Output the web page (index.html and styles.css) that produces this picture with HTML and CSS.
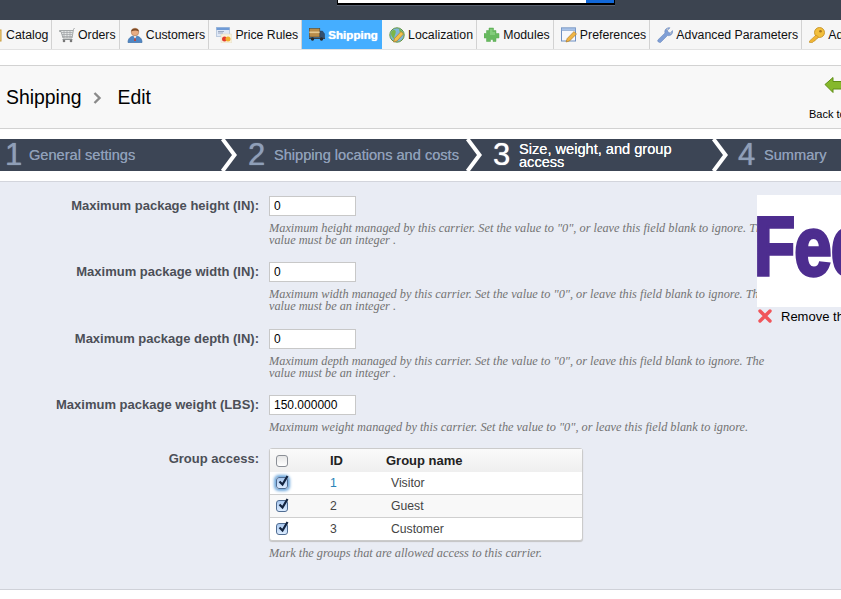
FILE: index.html
```html
<!DOCTYPE html>
<html lang="en">
<head>
<meta charset="utf-8">
<title>Shipping &gt; Edit</title>
<link rel="stylesheet" href="styles.css">
</head>
<body>
<header class="topbar">
  <div class="search"><span class="search-btn"></span></div>
</header>
<nav class="menu">
  <a class="item item-first"><svg class="ico" viewBox="0 0 16 16"><rect x="1" y="3" width="13" height="11" fill="#f3d68a" stroke="#c79a3a"/></svg>Catalog</a>
  <a class="item"><svg class="ico" viewBox="0 0 16 16"><path d="M15.500 1l-1 1.500L13 11H4L2 4.500H.5V3.500h13.500" fill="#e4e7e7" stroke="#8f9496" stroke-width=".8"/><path d="M2.500 5.500h11M3 7.500h10M3.500 9.500h9.500M5 4v7M8 4v7M11 4v7" stroke="#9da1a3" stroke-width=".7"/><path d="M3.500 12.500h10" stroke="#8f9496"/><circle cx="5" cy="14" r="1.300" fill="#777"/><circle cx="12" cy="14" r="1.300" fill="#777"/></svg>Orders</a>
  <a class="item"><svg class="ico" viewBox="0 0 16 16"><path d="M1 15.500c0-4 2.500-6.500 7-6.500s7 2.500 7 6.500z" fill="#4f87c4" stroke="#3d6ea6" stroke-width=".7"/><path d="M6.500 9h3L8 12z" fill="#f0f0f0"/><path d="M7.500 11h1l.5 3H7z" fill="#c8402e"/><circle cx="8" cy="5" r="3.800" fill="#e9ad82" stroke="#9c6a44" stroke-width=".5"/><path d="M4.200 4.500C4 .5 12 .2 11.800 4.500 10 3.300 7 3.300 4.200 4.500z" fill="#7c4a26"/></svg>Customers</a>
  <a class="item"><svg class="ico" viewBox="0 0 16 16"><rect x=".5" y="0.500" width="13" height="9" fill="#dfe8f6" stroke="#a9bcd6" stroke-width=".7"/><rect x=".5" y=".5" width="13" height="2.500" fill="#6f9bd6"/><path d="M2 4.500h6M2 6h5" stroke="#8a9bb8" stroke-width=".8"/><rect x="5" y="7" width="11" height="9" rx="1" fill="#f8f1dc" stroke="#ddd5bd" stroke-width=".5"/><circle cx="8.500" cy="12" r="2.500" fill="#e23b2e"/><circle cx="12" cy="12" r="2.500" fill="#f1b02f"/></svg>Price Rules</a>
  <a class="item item-active"><svg class="ico" viewBox="0 0 16 16"><rect x=".3" y="1.500" width="10.500" height="8.500" fill="#b98c4a" stroke="#5d4522" stroke-width=".6"/><rect x=".3" y="4.500" width="10.500" height="1.600" fill="#e5c88f"/><path d="M11 4h2.500L15.700 7v3.500H11z" fill="#33506e" stroke="#233a52" stroke-width=".4"/><rect x="0" y="10.500" width="16" height="1.500" fill="#37404c"/><circle cx="3.500" cy="12" r="1.700" fill="#2a2a2a"/><circle cx="12.500" cy="12" r="1.700" fill="#2a2a2a"/></svg>Shipping</a>
  <a class="item"><svg class="ico" viewBox="0 0 16 16"><circle cx="8" cy="8" r="7.200" fill="#7fb7d8" stroke="#64953d"/><path d="M2.500 4.500c3-3 5-1 4 2S5 9 6 12.500C3 11 1.200 7.500 2.500 4.500zM10 1.800c2.500 1 4.500 3.500 4.500 6-2.300 0-4.500-3-4.500-6z" fill="#7cb648"/><path d="M4.500 15l1-3.500 6.500-7 2.500 2.500-6.500 7z" fill="#f2c14a" stroke="#a8742a" stroke-width=".6"/></svg>Localization</a>
  <a class="item"><svg class="ico" viewBox="0 0 16 16"><path d="M5 1h4.500v2.500h2.500v3h3V11h-3v3.500H9V12.500H6.500v2H2.500V11H0V6.500h2.500v-3H5z" fill="#67b95f" stroke="#58a850" stroke-width=".5"/><path d="M6 2h2.500v3H11v3H6z" fill="#82cc7a"/></svg>Modules</a>
  <a class="item"><svg class="ico" viewBox="0 0 16 16"><rect x=".5" y="1" width="14" height="13" fill="#f6f8fc" stroke="#6f8fc0"/><rect x=".5" y="1" width="14" height="2.500" fill="#a9c3e8" stroke="#6f8fc0" stroke-width=".5"/><path d="M5 15l1.200-3.500L13 4.500l2.500 2.500-7 7z" fill="#f0b544" stroke="#a8741e" stroke-width=".6"/></svg>Preferences</a>
  <a class="item"><svg class="ico" viewBox="0 0 16 16"><path d="M.8 13L8 6C7 3 9.500.3 13 .8L10.500 3.300l.7 2 2 .7L15.600 3.500C16 7 13.500 9.300 10.500 8.500l-7 7C2 16 .3 14.500.8 13z" fill="#7f9fd6" stroke="#5f7fb6" stroke-width=".5"/><path d="M11 1.500l-1 1.500M13.200 6.500l1.200-1" stroke="#c8c8c8" stroke-width="1.200"/></svg>Advanced Parameters</a>
  <a class="item"><svg class="ico" viewBox="0 0 16 16"><circle cx="10.500" cy="5.500" r="5" fill="#f2bf3c" stroke="#c08a1c" stroke-width=".8"/><circle cx="11.500" cy="4.200" r="1.300" fill="#a8741e"/><path d="M7 8L.5 14v1.500h3L5 14l1 0 .5-1.500 1.500-.5 1.500-2z" fill="#f0b534" stroke="#c08a1c" stroke-width=".6"/></svg>Administration</a>
</nav>

<section class="toolbar">
  <h1 class="crumbs">Shipping<svg class="crumb-sep" viewBox="0 0 9 12"><path d="M1.500 1l5 5-5 5" fill="none" stroke="#8a8a8a" stroke-width="2.400"/></svg>Edit</h1>
  <a class="back">
    <svg class="back-ico" viewBox="0 0 34 24"><path d="M1 7.500L9 .5v4h17c3 0 5 2 5 5v14h-7V12H9v3.500z" fill="#86b82c" stroke="#5f8f16"/></svg>
    <span>Back to list</span>
  </a>
</section>

<ol class="steps">
  <li class="step step-a"><span class="num">1</span><span class="lbl">General settings</span><svg class="chev" viewBox="0 0 17 32"><path d="M1.500 0L13.500 16 1.500 32" fill="none" stroke="#fff" stroke-width="4"/></svg></li>
  <li class="step step-b"><span class="num">2</span><span class="lbl">Shipping locations and costs</span><svg class="chev" viewBox="0 0 17 32"><path d="M1.500 0L13.500 16 1.500 32" fill="none" stroke="#fff" stroke-width="4"/></svg></li>
  <li class="step step-c step-on"><span class="num">3</span><span class="lbl">Size, weight, and group access</span><svg class="chev" viewBox="0 0 17 32"><path d="M1.500 0L13.500 16 1.500 32" fill="none" stroke="#fff" stroke-width="4"/></svg></li>
  <li class="step step-d"><span class="num">4</span><span class="lbl">Summary</span></li>
</ol>

<main class="panel">
  <div class="logo-box">
    <div class="logo"><span class="logo-text">FedEx</span></div>
    <div class="remove"><svg class="x-ico" viewBox="0 0 14 14"><path d="M2 2l10 10M12 2L2 12" stroke="#f0555a" stroke-width="3.400" stroke-linecap="round"/></svg>Remove the logo</div>
  </div>

  <div class="row">
    <label class="lab">Maximum package height (IN):</label>
    <div class="field"><input class="inp" type="text" value="0">
      <p class="help">Maximum height managed by this carrier. Set the value to "0", or leave this field blank to ignore. The value must be an integer .</p></div>
  </div>
  <div class="row">
    <label class="lab">Maximum package width (IN):</label>
    <div class="field"><input class="inp" type="text" value="0">
      <p class="help">Maximum width managed by this carrier. Set the value to "0", or leave this field blank to ignore. The value must be an integer .</p></div>
  </div>
  <div class="row">
    <label class="lab">Maximum package depth (IN):</label>
    <div class="field"><input class="inp" type="text" value="0">
      <p class="help">Maximum depth managed by this carrier. Set the value to "0", or leave this field blank to ignore. The value must be an integer .</p></div>
  </div>
  <div class="row">
    <label class="lab">Maximum package weight (LBS):</label>
    <div class="field"><input class="inp" type="text" value="150.000000">
      <p class="help">Maximum weight managed by this carrier. Set the value to "0", or leave this field blank to ignore.</p></div>
  </div>
  <div class="row row-last">
    <label class="lab">Group access:</label>
    <div class="field">
      <table class="grp">
        <thead><tr><th class="c-box"><span class="cb"></span></th><th class="c-id">ID</th><th class="c-name">Group name</th></tr></thead>
        <tbody>
          <tr><td class="c-box"><span class="cb cb-on cb-focus"><svg viewBox="0 0 12 12"><path d="M2.500 5.500l3 3L10.500 0" fill="none" stroke="#12233f" stroke-width="2.200"/></svg></span></td><td class="c-id id-link">1</td><td class="c-val">Visitor</td></tr>
          <tr class="alt"><td class="c-box"><span class="cb cb-on"><svg viewBox="0 0 12 12"><path d="M2.500 5.500l3 3L10.500 0" fill="none" stroke="#12233f" stroke-width="2.200"/></svg></span></td><td class="c-id">2</td><td class="c-val">Guest</td></tr>
          <tr><td class="c-box"><span class="cb cb-on"><svg viewBox="0 0 12 12"><path d="M2.500 5.500l3 3L10.500 0" fill="none" stroke="#12233f" stroke-width="2.200"/></svg></span></td><td class="c-id">3</td><td class="c-val">Customer</td></tr>
        </tbody>
      </table>
      <p class="help help-table">Mark the groups that are allowed access to this carrier.</p>
    </div>
  </div>
</main>
</body>
</html>
```
FILE: styles.css
```css
* { box-sizing: border-box; }
html, body { margin: 0; padding: 0; width: 841px; height: 599px; overflow: hidden; background: #fff; font-family: "Liberation Sans", Arial, sans-serif; color: #000; }

.topbar { height: 20px; background: #3c4450; padding-left: 337px; }
.search { width: 278px; height: 5px; background: #fff; border: 1px solid #000; border-top: 0; border-bottom-width: 2px; box-shadow: 0 1px 0 #596170; display: flex; justify-content: flex-end; }
.search-btn { width: 28px; height: 3px; background: #1268d8; }

.menu { height: 30px; display: flex; background: #f6f6f6; border-bottom: 1px solid #e2e2e2; margin-left: -13px; width: 1000px; }
.item { display: flex; align-items: center; height: 29px; padding: 0 3px 0 7.200px; border-right: 1px solid #d2d2d2; font-size: 12.300px; color: #111; white-space: nowrap; }
.item-first { padding: 0 2.400px 0 0; }
.item-active { background: #45aeff; color: #fff; font-weight: 700; font-size: 11.600px; border-right: 0; padding: 0 4px 0 7px; text-shadow: 0 0 1px #fff; }
.ico { width: 16px; height: 16px; margin-right: 3px; flex: none; }

.toolbar { margin-top: 15px; height: 64px; background: #f8f8f8; border-top: 1px solid #d2d2d2; border-bottom: 1px solid #d2d2d2; display: flex; justify-content: space-between; padding-left: 6px; width: 929px; }
.crumbs { margin: 0; font-size: 19.400px; font-weight: 400; line-height: 58px; display: flex; align-items: center; color: #000; }
.crumb-sep { width: 9px; height: 12px; margin: 2px 15px 0 12px; }
.back { width: 120px; display: block; padding: 11px 0 0 0; font-size: 11px; }
.back-ico { display: block; width: 34px; height: 24px; margin-left: 15px; }
.back span { display: block; margin-top: 7px; white-space: nowrap; }

.steps { list-style: none; margin: 10px 0 0; padding: 0; height: 32px; display: flex; background: #3c4555; color: #8f9fb8; width: 841px; overflow: hidden; }
.step { display: flex; align-items: center; height: 32px; flex: none; }
.step-a { width: 238px; padding-left: 5px; }
.step-b { width: 245px; padding-left: 10px; }
.step-c { width: 246px; padding-left: 10px; }
.step-d { padding-left: 9px; }
.step-on { color: #fff; }
.num { font-size: 31px; width: 24px; flex: none; text-shadow: 0 0 1px currentColor; }
.step-b .num, .step-c .num, .step-d .num { width: 26px; }
.lbl { font-size: 14.600px; line-height: 13px; text-shadow: 0 0 .6px currentColor; }
.step-c .lbl { width: 175px; margin-top: 2px; }
.chev { width: 17px; height: 32px; margin-left: auto; flex: none; }

.panel { position: relative; margin-top: 10px; height: 409px; background: #e9ecf4; border-top: 1px solid #d3d5dc; border-bottom: 1px solid #cfd1d8; padding-top: 14px; }
.row { display: flex; padding-bottom: 16.300px; }
.row-last { padding-bottom: 0; }
.lab { width: 259px; padding-top: 2px; text-align: right; font-size: 13px; font-weight: 700; color: #4c4f57; line-height: 15px; flex: none; }
.field { margin-left: 10px; width: 500px; flex: none; }
.inp { display: block; width: 87px; height: 20px; border: 1px solid #c8c8c8; background: #fff; padding: 0 4px; font: 12px "Liberation Sans", Arial, sans-serif; color: #000; }
.help { margin: 6px 0 0; font-family: "Liberation Serif", Georgia, serif; font-style: italic; font-size: 12.300px; line-height: 12px; color: #737373; }
.help-table { margin-top: 6px; }

.grp { width: 314px; border-collapse: separate; border-spacing: 0; background: #fff; border: 1px solid #cbcbcb; border-radius: 3px; box-shadow: 0 1px 1px #c4c4c4; font-size: 12.200px; margin-top: -1px; }
.grp th { height: 23px; text-align: left; background: linear-gradient(#fafafa, #efefef); font-size: 13px; color: #222; padding: 0; }
.grp td { height: 23px; padding: 0; border-top: 1px solid #cfcfcf; color: #444; }
.grp tbody tr:first-child td { border-top: 0; height: 22px; }
.alt td { background: #f8f8f8; }
.c-box { width: 60px; padding-left: 6px !important; }
.c-id { width: 56px; }
.c-val { padding-left: 5px !important; }
.id-link { color: #2a83b8 !important; }
.cb { display: block; width: 12px; height: 12px; border: 1px solid #8b8f96; border-radius: 3px; background: linear-gradient(#e6e6e6, #fff); }
.cb-on { background: linear-gradient(#a9c8ef, #dcecff); border-color: #4f6c92; overflow: visible; }
.cb-on svg { display: block; width: 12px; height: 12px; margin: -2px 0 0 0; overflow: visible; }
.cb-focus { box-shadow: 0 0 3px 2px #6fa8dc; }

.logo-box { position: absolute; left: 757px; top: 13px; width: 84px; }
.logo { height: 112px; background: #fff; overflow: hidden; }
.logo-text { display: inline-block; transform: scaleX(.8); transform-origin: 0 0; font-size: 84px; font-weight: 700; color: #4d2d8f; -webkit-text-stroke: 3.500px #4d2d8f; letter-spacing: -1px; line-height: 103px; white-space: nowrap; margin-left: -3px; }
.remove { display: flex; align-items: center; height: 18px; padding-left: 1px; font-size: 13px; white-space: nowrap; }
.x-ico { width: 14px; height: 14px; margin-right: 9px; flex: none; }
```
